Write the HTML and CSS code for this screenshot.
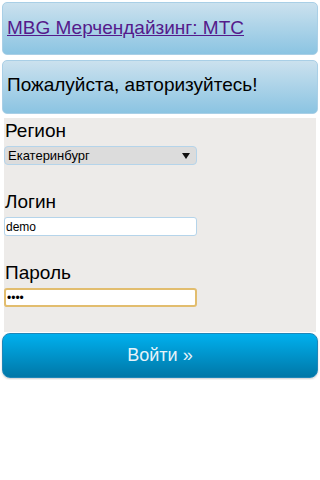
FILE: index.html
```html
<!DOCTYPE html>
<html lang="ru">
<head>
  <meta charset="UTF-8">
  <meta name="viewport" content="width=device-width, initial-scale=1.0">
  <title>MBG Мерчендайзинг: МТС</title>
  <link rel="stylesheet" href="styles.css">
</head>
<body>
  <div class="bar">
    <h1><a href="#" class="title-link">MBG Мерчендайзинг: МТС</a></h1>
  </div>
  <div class="bar">
    <h2>Пожалуйста, авторизуйтесь!</h2>
  </div>
  <form class="login-form">
    <div class="field">
      <label for="region">Регион</label>
      <div class="select-wrap">
        <select id="region" name="region">
          <option>Екатеринбург</option>
        </select>
      </div>
    </div>
    <div class="field">
      <label for="login">Логин</label>
      <input type="text" id="login" name="login" value="demo">
    </div>
    <div class="field last">
      <label for="password">Пароль</label>
      <input type="password" id="password" name="password" value="demo" class="focused">
    </div>
  </form>
  <button type="submit" class="submit-btn">Войти &raquo;</button>
</body>
</html>
```

FILE: styles.css
```css
body {
  font-family: "Liberation Sans", Arial, sans-serif;
  margin: 0;
  padding: 2px;
  background: #fff;
}
.bar {
  height: 51px;
  border: 1px solid #a9cfe6;
  border-radius: 5px;
  background: linear-gradient(to bottom, #cbe1ee, #8bc4e2);
  margin-bottom: 5px;
  padding: 0 4px;
  display: flex;
  align-items: center;
}
.bar + .bar {
  height: 52px;
  margin-bottom: 4px;
}
h1, h2 {
  margin: 0;
  font-size: 19px;
  font-weight: normal;
}
h1 {
  margin-top: -1px;
}
h2 {
  color: #000;
  margin-top: -4px;
}
.title-link {
  color: #551a8b;
  text-decoration: underline;
}
.login-form {
  background: #edebe9;
  margin: 0 2px;
  padding: 2px 0 25px 0;
}
.field {
  margin-bottom: 26px;
}
.field.last {
  margin-bottom: 0;
}
label {
  display: block;
  font-size: 19px;
  line-height: 22px;
  margin-bottom: 4px;
  padding-left: 1px;
  color: #000;
}
.select-wrap {
  position: relative;
  width: 193px;
}
.select-wrap::after {
  content: "";
  position: absolute;
  right: 7px;
  top: 7px;
  border-left: 4px solid transparent;
  border-right: 4px solid transparent;
  border-top: 6px solid #111;
  pointer-events: none;
}
select {
  -webkit-appearance: none;
  appearance: none;
  display: block;
  width: 193px;
  height: 19px;
  box-sizing: border-box;
  border: 1px solid #b5d4ea;
  border-radius: 4px;
  background: #dcdcdc;
  font-family: inherit;
  font-size: 13px;
  color: #000;
  padding: 0 3px;
  margin: 0;
}
input {
  display: block;
  width: 193px;
  height: 19px;
  box-sizing: border-box;
  border: 1px solid #b5d4ea;
  border-radius: 3px;
  background: #fff;
  font-family: inherit;
  font-size: 12px;
  color: #000;
  padding: 0 1px;
  margin: 0;
  outline: none;
}
input.focused {
  border: 2px solid #e2bd6e;
}
.submit-btn {
  display: block;
  width: 316px;
  height: 45px;
  margin-top: 1px;
  border: 1px solid #1e86b8;
  border-radius: 8px;
  background: linear-gradient(to bottom, #00b0ee, #0077a7);
  color: #e6f3fa;
  font-family: inherit;
  font-size: 18px;
  cursor: pointer;
  box-shadow: 0 1px 2px rgba(0, 0, 0, 0.2);
}
```
